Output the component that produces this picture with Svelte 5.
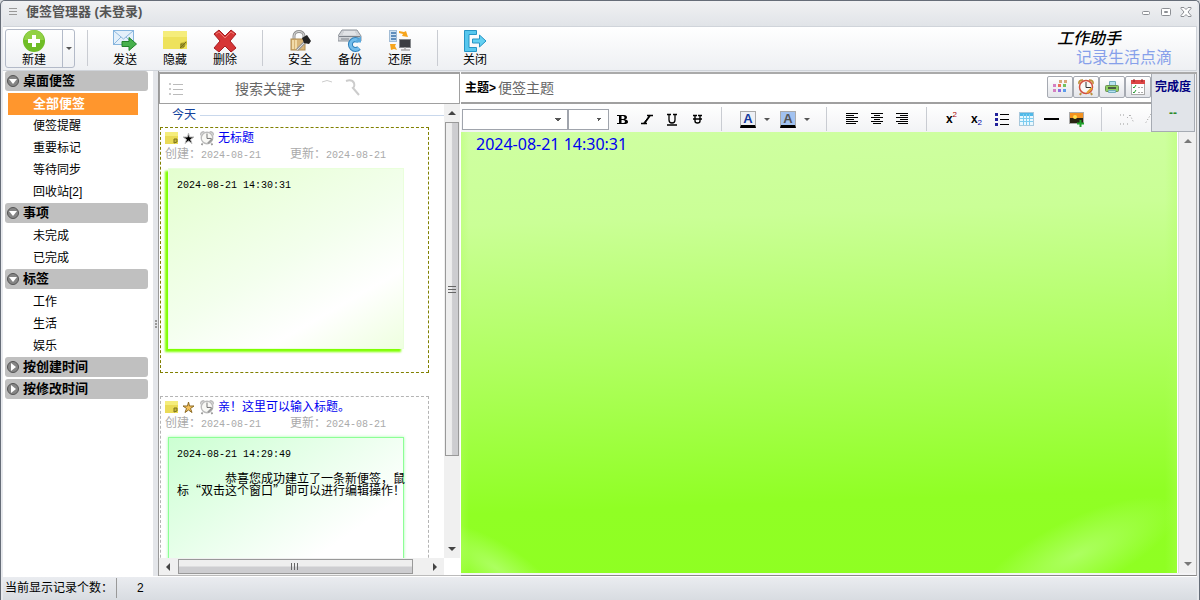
<script lang="ts">
  type Section = { title: string; open: boolean; items: string[] };

  let sections = $state<Section[]>([
    { title: '桌面便签', open: true, items: ['全部便签', '便签提醒', '重要标记', '等待同步', '回收站[2]'] },
    { title: '事项', open: true, items: ['未完成', '已完成'] },
    { title: '标签', open: true, items: ['工作', '生活', '娱乐'] },
    { title: '按创建时间', open: false, items: [] },
    { title: '按修改时间', open: false, items: [] },
  ]);

  const notes = [
    { title: '无标题', date: '2024-08-21', stamp: '2024-08-21 14:30:31', text: '', starred: false, theme: 'lime' },
    {
      title: '亲！这里可以输入标题。',
      date: '2024-08-21',
      stamp: '2024-08-21 14:29:49',
      text: '恭喜您成功建立了一条新便签，鼠标“双击这个窗口”即可以进行编辑操作！',
      starred: true,
      theme: 'mint',
    },
  ];

  let current  = $state('全部便签');
  let selected = $state(0);
  let keyword  = $state('');
  let subject  = $state('');
  let body     = $state('2024-08-21 14:30:31');
</script>

{#snippet tool(name: string, label: string)}
  <button class="tool">
    <svg width="24" height="24" viewBox="0 0 24 24" aria-hidden="true">
      {#if name === 'send'}
        <rect x="0.500" y="1.500" width="20" height="14" fill="#e4f0fa" stroke="#86b5de" />
        <path d="M1 2l9.500 8L20 2M1 15l7-7M20 15l-7-7" fill="none" stroke="#8fb8de" />
        <path d="M9 12.500h7v-4l7.500 6.500-7.500 6.500v-4H9z" fill="#46b04c" stroke="#23802b" />
      {:else if name === 'hide'}
        <path d="M0 2h24v18H0z" fill="#eee25c" />
        <path d="M0 2h24v6H0z" fill="#f5ed7b" />
        <path d="M17 20v-6l7-2v3l-5 5z" fill="#c9bd3a" />
        <path d="M17 19l6-6M18 15h3v3h-3z" fill="none" stroke="#77701a" />
      {:else if name === 'delete'}
        <path d="M1 5l5-4 6 6 6-6 5 4-6 7 6 7-5 4-6-6-6 6-5-4 6-7z" fill="#d63636" stroke="#a61d22" />
        <path d="M3 5l3-2 6 6 6-6 3 2" fill="none" stroke="#ef7770" />
      {:else if name === 'lock'}
        <path d="M6 12V7c0-6 10-6 10 0v5" fill="none" stroke="#929292" stroke-width="3" />
        <path d="M6 12V7c0-6 10-6 10 0v5" fill="none" stroke="#dedede" />
        <rect x="3" y="10" width="14" height="11" fill="#d8b578" stroke="#b08c50" />
        <path d="M5 11v9M8 11v9" stroke="#f2dba9" stroke-width="2" />
        <path d="M9 21l8-8" stroke="#999" stroke-width="3" />
        <path d="M9 21l8-8" stroke="#ddd" />
        <path d="M14 9l5-3 4 6-2 3-5-1z" fill="#222" />
      {:else if name === 'backup'}
        <path d="M4 1h15l4 6v5H0V7z" fill="#d1d3d7" stroke="#8f949b" />
        <path d="M1 7.500h21M3 10h8" stroke="#7d828a" />
        <path d="M6 3h11M5 5h13" stroke="#f2f3f5" />
        <path d="M21 12a5 5 0 1 0 0 7" fill="none" stroke="#2f80ba" stroke-width="5" />
        <path d="M21 12a5 5 0 1 0 0 7" fill="none" stroke="#72bceb" stroke-width="3" />
        <path d="M16 13.500h7V7z" fill="#5aa9dd" />
      {:else if name === 'restore'}
        <rect x="1.500" y="1.500" width="7" height="11" fill="#cfe2f3" stroke="#a3bdd6" />
        <path d="M3 4h5M3 7h5M3 10h5" stroke="#3c73aa" stroke-width="1.500" />
        <path d="M11 2l5 1 2-1 2 6-6-1 1-2-4-1z" fill="#f6a51d" />
        <path d="M2 15h6l-1 2 2 4-3-1-3 1z" fill="#f6a51d" />
        <rect x="11.500" y="10.500" width="11" height="8" fill="#3b3e43" stroke="#85888c" />
        <path d="M17 18v3M13 21h9" stroke="#aaa" stroke-width="1.500" />
      {:else}
        <path d="M13.500 1.500H1.500v21h12v-4H6v-13h7.500z" fill="#57c7ee" stroke="#2695c5" />
        <path d="M9.500 10h7V6l6.500 6-6.500 6v-4h-7z" fill="#64d0f2" stroke="#2695c5" />
      {/if}
    </svg>
    <span>{label}</span>
  </button>
{/snippet}

{#snippet clock(size: number, gray: boolean)}
  <svg width={size} height={size} viewBox="0 0 18 18" aria-hidden="true">
    <path d="M2 6q-1-4 4-4M12 2q5 0 4 4" fill={gray ? '#ddd' : '#e8c676'} stroke={gray ? '#bbb' : '#b98f3c'} stroke-width="1.500" />
    <path d="M4 15l-1 2M14 15l1 2" stroke={gray ? '#999' : '#b98f3c'} stroke-width="2" />
    <circle cx="9" cy="9" r="6.500" fill="#f8f8f5" stroke={gray ? '#bbb' : '#d2503f'} stroke-width="1.500" />
    <path d="M9 4v5.500h5" fill="none" stroke={gray ? '#666' : '#333'} />
    <path d="M10 15l5-5" stroke={gray ? '#999' : '#e3a22f'} stroke-width="2" />
  </svg>
{/snippet}

{#snippet mark(name: string)}
  <svg width="18" height="18" viewBox="0 0 18 18" aria-hidden="true">
    {#if name === 'bold'}
      <path d="M4 5h7q3 0 3 2.500q0 1.500-2 2q3 0 3 2.500q0 2-4 2H4v-1h2V6H4zM8.500 6v3h1.500q1.500 0 1.500-1.500T10 6zm0 4v3h1.500q2 0 2-1.500t-2-1.500z" fill="#000" fill-rule="evenodd" />
    {:else if name === 'italic'}
      <path d="M9 5.500h6M3 13.500h6M12.500 5L6 14" fill="none" stroke="#000" stroke-width="1.500" />
      <path d="M12 5L5 14" stroke="#000" />
    {:else if name === 'underline'}
      <path d="M4 4.500h4M10 4.500h4M6 4v6q0 3 3 3t3-3V4M4 15h10" fill="none" stroke="#000" stroke-width="1.300" />
    {:else if name === 'strike'}
      <path d="M5 5.500h4M10 5.500h4M7 5v6q0 2 2.500 2t2.500-2V5M5 9h9" fill="none" stroke="#000" stroke-width="1.400" />
    {:else if name === 'left'}
      <path d="M3 3.500h12M3 5.500h8M3 7.500h12M3 9.500h8M3 11.500h12M3 13.500h10" stroke="#000" />
    {:else if name === 'center'}
      <path d="M3 3.500h12M6 5.500h6M3 7.500h12M6 9.500h6M3 11.500h12M5 13.500h8" stroke="#000" />
    {:else if name === 'right'}
      <path d="M3 3.500h12M7 5.500h8M3 7.500h12M7 9.500h8M3 11.500h12M5 13.500h10" stroke="#000" />
    {:else if name === 'list'}
      <path d="M7 4.500h9M7 9.500h9M7 14.500h9" stroke="#000" />
      <path d="M2 3h3v3H2zM2 8h3v3H2zM2 13h3v3H2z" fill="#22229b" />
    {:else if name === 'table'}
      <rect x="1.500" y="2.500" width="14" height="13" fill="#e8f8ff" stroke="#a8c8dc" />
      <path d="M2 3h13v3H2z" fill="#50b9e8" />
      <path d="M5.500 4v11M8.500 4v11M11.500 4v11M2 8.500h13M2 11.500h13" stroke="#7dcdf0" />
    {:else if name === 'rule'}
      <path d="M1 9h15" stroke="#000" stroke-width="2" />
    {:else if name === 'image'}
      <rect x="1.500" y="2.500" width="14" height="11" fill="#282212" stroke="#aaa" />
      <path d="M2 3h13v5H2z" fill="#f39220" />
      <circle cx="7" cy="7" r="2" fill="#ffe04d" />
      <path d="M12.500 10v7M9 13.500h7" stroke="#21a32c" stroke-width="2" />
    {:else if name === 'undo'}
      <path d="M2 5h6M2 14h5M9 14h3M12 5l4 8M9 8l3-3" fill="none" stroke="#999" stroke-dasharray="1 2" />
    {:else}
      <path d="M8 4l-6 10M14 4l-5 10" fill="none" stroke="#999" stroke-dasharray="1 2" />
    {/if}
  </svg>
{/snippet}

{#snippet fmt(name: string, label: string)}
  <button class="fmt" aria-label={label}>{@render mark(name)}</button>
{/snippet}

<div class="window">
  <header class="titlebar">
    <svg width="10" height="10" viewBox="0 0 10 10" aria-hidden="true">
      <path d="M1 1.500h8M1 4.500h8M1 7.500h8" stroke="#999" />
    </svg>
    <h1>便签管理器 (未登录)</h1>
    <div class="controls">
      <button aria-label="最小化">
        <svg width="12" height="12"><rect x="2.500" y="5.500" width="7" height="3" rx="1" fill="#fff" stroke="#8c8f94" /></svg>
      </button>
      <button aria-label="最大化">
        <svg width="12" height="12"><rect x="1.500" y="2.500" width="9" height="7" rx="1" fill="#fff" stroke="#8c8f94" /><path d="M4.500 5.500h3v1h-3z" fill="none" stroke="#8c8f94" /></svg>
      </button>
      <button aria-label="关闭窗口">
        <svg width="12" height="12"><path d="M1 1.500h3l2 2 2-2h3v1L8 6l3 3.500v1H8l-2-2-2 2H1v-1L4 6 1 2.500z" fill="#fff" stroke="#8c8f94" /></svg>
      </button>
    </div>
  </header>

  <div class="toolbar">
    <div class="split-btn">
      <button class="tool tool--new">
        <svg width="24" height="24" viewBox="0 0 24 24" aria-hidden="true">
          <circle cx="12" cy="12" r="11" fill="#6fbd26" />
          <path d="M2 11a10 10 0 0 1 20 0z" fill="#92d145" />
          <path d="M12 6v12M6 12h12" stroke="#fff" stroke-width="4" />
        </svg>
        <span>新建</span>
      </button>
      <button class="split-btn__more" aria-label="更多新建选项"><i class="caret"></i></button>
    </div>
    <i class="sep"></i>
    {@render tool('send', '发送')}
    {@render tool('hide', '隐藏')}
    {@render tool('delete', '删除')}
    <i class="sep"></i>
    {@render tool('lock', '安全')}
    {@render tool('backup', '备份')}
    {@render tool('restore', '还原')}
    <i class="sep"></i>
    {@render tool('close', '关闭')}
    <div class="brand">
      <em>工作助手</em>
      <span>记录生活点滴</span>
    </div>
  </div>

  <main>
    <nav class="sidebar">
      {#each sections as section}
        <button class="group" onclick={() => (section.open = !section.open)}>
          <svg width="14" height="14" viewBox="0 0 14 14" aria-hidden="true">
            <circle cx="7" cy="7" r="5.500" fill="#858585" stroke="#555" />
            {#if section.open}
              <path d="M3 5h8l-4 5z" fill="#fff" />
            {:else}
              <path d="M5 3v8l5-4z" fill="#fff" />
            {/if}
          </svg>
          {section.title}
        </button>
        {#if section.open}
          {#each section.items as item}
            <button class="item" class:item--active={current === item} onclick={() => (current = item)}>{item}</button>
          {/each}
        {/if}
      {/each}
    </nav>
    <div class="splitter"><i></i></div>

    <section class="list">
      <div class="search">
        <svg width="16" height="16" viewBox="0 0 16 16" aria-hidden="true">
          <path d="M5 3.500h10M5 8.500h10M5 13.500h10" stroke="#bbb" />
          <path d="M1 3h2M1 8h2M1 13h2" stroke="#ccc" stroke-width="2" />
        </svg>
        <input type="text" aria-label="搜索关键字" placeholder="搜索关键字" bind:value={keyword} />
        <svg width="40" height="20" viewBox="0 0 40 20" aria-hidden="true">
          <path d="M1 3q5-3 10 0" fill="none" stroke="#ccc" />
          <path d="M25 2q6-2 8 2 1 4-1 5l6 7" fill="none" stroke="#ccc" stroke-width="2" />
        </svg>
      </div>

      <div class="list__body">
        <div class="list__main">
          <div class="notes">
            <h2>今天</h2>
            {#each notes as note, i}
              <!-- svelte-ignore a11y_click_events_have_key_events -->
              <!-- svelte-ignore a11y_no_noninteractive_element_interactions -->
              <article class="note" class:note--selected={selected === i} onclick={() => (selected = i)}>
                <div class="note__head">
                  <svg width="13" height="14" viewBox="0 0 13 14" aria-hidden="true">
                    <path d="M0 1h13v12H0z" fill="#eadb56" />
                    <path d="M0 1h13v4H0z" fill="#f5ed7b" />
                    <path d="M9 12V8h3v3z" fill="#c6b932" stroke="#7c731e" />
                  </svg>
                  <svg width="13" height="14" viewBox="0 0 13 14" aria-hidden="true">
                    <path
                      d="M6.500 2l1 4H12L8.500 8.500l1.500 4-3.500-2.500L3 12.500l1.500-4L1 6h4.500z"
                      fill={note.starred ? '#f5c158' : '#000'}
                      stroke={note.starred ? '#8c6a24' : '#bbb'}
                    />
                  </svg>
                  {@render clock(16, true)}
                  <h3>{note.title}</h3>
                </div>
                <div class="note__dates">
                  <span>创建：<time>{note.date}</time></span>
                  <span>更新：<time>{note.date}</time></span>
                </div>
                <div class="paper paper--{note.theme}">
                  <time>{note.stamp}</time>
                  {#if note.text}<p>{note.text}</p>{/if}
                </div>
              </article>
            {/each}
          </div>
          <div class="hscroll" aria-hidden="true">
            <i class="arrow arrow--left"></i>
            <div class="hscroll__track"><div class="hscroll__thumb"><i class="grip"></i></div></div>
            <i class="arrow arrow--right"></i>
          </div>
        </div>
        <div class="vscroll" aria-hidden="true">
          <i class="arrow arrow--up"></i>
          <div class="vscroll__track"><div class="vscroll__thumb"><i class="grip grip--v"></i></div></div>
          <i class="arrow arrow--down"></i>
        </div>
      </div>
    </section>

    <section class="editor">
      <div class="editor__top">
        <div class="editor__bars">
          <div class="subject">
            <label for="subject">主题&gt;</label>
            <input id="subject" type="text" placeholder="便签主题" bind:value={subject} />
            <div class="subject__tools">
              <button aria-label="颜色">
                <svg width="18" height="18" viewBox="0 0 18 18">
                  <path d="M2 6h3v3H2zM2 11h3v3H2z" fill="#d57fc0" />
                  <path d="M7 6h3v3H7z" fill="#ef6f53" />
                  <path d="M7 11h3v3H7z" fill="#8f6be0" />
                  <path d="M12 6h3v3h-3z" fill="#74c25c" />
                  <path d="M12 11h3v3h-3z" fill="#5c9cea" />
                  <path d="M8 2h3v3H8zM13 2h3v3h-3z" fill="#d8a87c" />
                </svg>
              </button>
              <button aria-label="提醒">{@render clock(18, false)}</button>
              <button aria-label="打印">
                <svg width="18" height="18" viewBox="0 0 18 18">
                  <path d="M6.500 3.500h6v5h-6z" fill="#b8e2ef" stroke="#75afbf" />
                  <rect x="2.500" y="7.500" width="13" height="6" rx="1" fill="#8fcf62" stroke="#6b8f55" />
                  <path d="M5 9h8v2H5z" fill="#4a5a44" />
                  <path d="M5.500 12.500h7v2h-7z" fill="#b8e2ef" stroke="#75afbf" />
                </svg>
              </button>
              <button aria-label="待办">
                <svg width="18" height="18" viewBox="0 0 18 18">
                  <rect x="2.500" y="2.500" width="13" height="14" fill="#fff" stroke="#aaa" />
                  <path d="M2 2h14v4H2z" fill="#dc4545" />
                  <path d="M5 1v3M13 1v3" stroke="#8d2020" />
                  <path d="M4 9l1 1 2-3M4 14l1 1 2-3" fill="none" stroke="#279b32" />
                  <path d="M9 9.500h5M9 14.500h5" stroke="#aaa" stroke-dasharray="2 1" />
                </svg>
              </button>
            </div>
          </div>

          <div class="format">
            <select class="format__font" aria-label="字体"><option></option></select>
            <select class="format__size" aria-label="字号"><option></option></select>
            {@render fmt('bold', '粗体')}
            {@render fmt('italic', '斜体')}
            {@render fmt('underline', '下划线')}
            {@render fmt('strike', '删除线')}
            <i class="sep"></i>
            <button class="color" aria-label="文字颜色"><b>A</b><i class="caret"></i></button>
            <button class="color color--back" aria-label="背景颜色"><b>A</b><i class="caret"></i></button>
            <i class="sep"></i>
            {@render fmt('left', '左对齐')}
            {@render fmt('center', '居中')}
            {@render fmt('right', '右对齐')}
            <i class="sep"></i>
            <button class="fmt fmt--script" aria-label="上标">x<sup>2</sup></button>
            <button class="fmt fmt--script" aria-label="下标">x<sub>2</sub></button>
            {@render fmt('list', '列表')}
            {@render fmt('table', '表格')}
            {@render fmt('rule', '分隔线')}
            {@render fmt('image', '图片')}
            <i class="sep"></i>
            {@render fmt('undo', '撤销')}
            {@render fmt('redo', '重做')}
          </div>
        </div>
        <div class="progress">
          <span>完成度</span>
          <strong>--</strong>
        </div>
      </div>

      <div class="editor__body">
        <div class="sheet">
          <textarea aria-label="便签内容" bind:value={body} spellcheck="false"></textarea>
        </div>
        <div class="vscroll vscroll--idle" aria-hidden="true">
          <i class="arrow arrow--up"></i>
          <i class="arrow arrow--down"></i>
        </div>
      </div>
    </section>
  </main>

  <footer>
    <span class="footer__label">当前显示记录个数：</span>
    <span class="footer__count">2</span>
  </footer>
</div>

<style>
  :global(body) { margin: 0; background: #d6d9dd; }

  .window, .window :global(*) { box-sizing: border-box; }

  .window {
    height: 100vh;
    display: flex;
    flex-direction: column;
    border: 1px solid #666d78;
    border-bottom: none;
    border-radius: 5px 5px 0 0;
    padding: 0 2px;
    background: #e7e9ed;
    color: #000;
    font: 12px/16px "Liberation Sans", "Noto Sans CJK SC", sans-serif;
    overflow: hidden;
  }

  button, input, select, textarea {
    font: inherit;
    color: inherit;
    margin: 0;
    padding: 0;
    border: none;
    border-radius: 0;
    background: none;
    outline: none;
  }

  button { cursor: pointer; }
  svg { display: block; flex-shrink: 0; }
  h1, h2, h3, p { margin: 0; }

  .titlebar {
    flex: 0 0 25px;
    display: flex;
    align-items: center;
    gap: 8px;
    padding: 0 5px 3px 5px;
    background: linear-gradient(#f0f1f3, #e1e4e8);
  }

  h1 {
    flex: 1;
    font-size: 13px;
    font-weight: 700;
    color: #555;
  }

  .controls { display: flex; gap: 8px; }

  .toolbar {
    flex: 0 0 45px;
    display: flex;
    align-items: center;
    padding: 0 24px 1px 2px;
    border: 1px solid #d0d4da;
    border-left: none;
    background: linear-gradient(#fff, #eef0f3);
  }

  .tool {
    width: 50px;
    display: flex;
    flex-direction: column;
    align-items: center;
    justify-content: center;
    line-height: 14px;
  }

  .split-btn {
    display: flex;
    height: 39px;
    border: 1px solid #b3bac8;
    border-radius: 3px;
  }

  .tool--new { width: 56px; }
  .split-btn__more {
    width: 12px;
    border-left: 1px solid #b3bac8;
  }

  .caret {
    display: block;
    width: 0;
    margin: 0 auto;
    border: 3px solid transparent;
    border-top-color: #555;
    border-bottom: none;
  }

  .sep {
    width: 1px;
    height: 36px;
    margin: 0 12px;
    background: #c9ccd2;
    flex-shrink: 0;
  }

  .brand {
    margin-left: auto;
    width: 115px;
    display: flex;
    flex-direction: column;
    line-height: 19px;
  }

  .brand em {
    font-size: 16px;
    font-weight: 500;
  }

  .brand span {
    align-self: flex-end;
    font-size: 16px;
    color: #86a0ea;
  }

  main {
    flex: 1;
    min-height: 0;
    display: flex;
  }

  .sidebar {
    width: 150px;
    flex-shrink: 0;
    padding: 0 5px 0 2px;
    background: #fff;
    display: flex;
    flex-direction: column;
  }

  .group {
    height: 20px;
    margin: 0 0 2px;
    padding-left: 1px;
    display: flex;
    align-items: center;
    gap: 3px;
    border-radius: 3px;
    background: #c0c0c0;
    font-size: 13px;
    font-weight: 700;
  }

  .item {
    height: 22px;
    margin: 0 10px 0 3px;
    padding-left: 25px;
    text-align: left;
  }

  .item--active {
    background: #ff962d;
    color: #fff;
    font-size: 13px;
    font-weight: 700;
  }

  .splitter {
    width: 6px;
    flex-shrink: 0;
    display: flex;
    align-items: center;
    justify-content: center;
    background: #e4e6ea;
    border-right: 1px solid #999;
  }

  .splitter i { height: 8px; border-left: 2px dotted #999; }

  .list {
    width: 302px;
    flex-shrink: 0;
    display: flex;
    flex-direction: column;
    margin-top: 1px;
    padding-right: 1px;
    background: #fff;
    border-bottom: 1px solid #bbb;
  }

  .search {
    flex: 0 0 32px;
    display: flex;
    align-items: center;
    padding: 0 98px 0 8px;
    border: 1px solid #a0a0a0;
    border-width: 2px 1px 1px;
  }

  .search input {
    flex: 1;
    min-width: 0;
    margin-left: 51px;
    font-size: 14px;
    line-height: 20px;
  }

  .search input::placeholder, .subject input::placeholder { color: #666; opacity: 1; }

  .list__body {
    flex: 1;
    min-height: 0;
    display: flex;
  }

  .list__main {
    flex: 1;
    min-width: 0;
    display: flex;
    flex-direction: column;
  }

  .notes {
    flex: 1;
    min-height: 0;
    overflow: hidden;
    padding: 3px 0 0 1px;
  }

  h2 {
    display: flex;
    align-items: center;
    gap: 4px;
    padding-left: 12px;
    margin-bottom: 4px;
    font-size: 12px;
    font-weight: 400;
    line-height: 16px;
    color: #15439c;
  }

  h2::after {
    content: '';
    flex: 1;
    height: 1px;
    background: #c9d8ec;
  }

  .note {
    width: 269px;
    height: 246px;
    margin-bottom: 23px;
    padding: 2px 4px;
    border: 1px dashed #b4b4b4;
  }

  .note--selected { border-color: #808000; }

  .note__head {
    display: flex;
    align-items: center;
    gap: 4px;
  }

  h3 {
    font-size: 12px;
    font-weight: 400;
    line-height: 16px;
    margin-left: -1px;
    color: #0000f0;
  }

  .note__dates {
    display: flex;
    gap: 29px;
    color: #aaa;
  }

  time {
    display: inline-block;
    font: 10px/16px "Liberation Mono", monospace;
  }

  .paper {
    width: 236px;
    height: 181px;
    margin: 4px 0 0 3px;
    padding: 7px 0 8px 8px;
    border: 1px solid #eaffdc;
  }

  .paper--lime {
    background: linear-gradient(150deg, #e4ffcf 0%, #f3ffed 50%, #fff 75%, #eeffdf 100%);
    box-shadow: -3px 3px 2px #7fff00;
  }

  .paper--mint {
    background: linear-gradient(145deg, #ccffd2, #fff 65%);
    border-color: #8dff96;
    box-shadow: 0 0 3px #a6ffac;
  }

  .paper p {
    width: 230px;
    margin-top: 9px;
    font-family: "Noto Sans CJK SC", sans-serif;
    line-height: 12px;
    text-indent: 48px;
  }

  .arrow {
    display: block;
    flex-shrink: 0;
    width: 0;
    height: 0;
    border: 4px solid transparent;
  }

  .arrow--up { border-bottom-color: #444; border-top: none; }
  .arrow--down { border-top-color: #444; border-bottom: none; }
  .arrow--left { border-right-color: #444; border-left: none; }
  .arrow--right { border-left-color: #444; border-right: none; }

  .hscroll {
    flex: 0 0 17px;
    display: flex;
    align-items: center;
    gap: 8px;
    padding: 0 7px;
    background: #f0f0f0;
  }

  .hscroll__track { flex: 1; }
  .hscroll__thumb {
    width: 95%;
    height: 15px;
    display: flex;
    align-items: center;
    justify-content: center;
    border: 1px solid #999;
    background: linear-gradient(#eee 45%, #cdcdd0 55%);
  }

  .vscroll {
    flex: 0 0 16px;
    display: flex;
    flex-direction: column;
    align-items: center;
    gap: 7px;
    padding: 7px 0;
    margin-bottom: 17px;
    background: #f0f0f0;
  }

  .vscroll__track { flex: 1; align-self: stretch; padding: 0 1px; }
  .vscroll__thumb {
    height: 80%;
    display: flex;
    align-items: center;
    justify-content: center;
    border: 1px solid #999;
    background: linear-gradient(90deg, #eee 45%, #cdcdd0 55%);
  }

  .vscroll--idle {
    flex-basis: 18px;
    margin: 0;
    justify-content: space-between;
    border-left: 1px solid #ddd;
  }

  .vscroll--idle .arrow { opacity: 0.7; }

  .grip {
    width: 8px;
    height: 7px;
    background: repeating-linear-gradient(90deg, #666 0 1px, transparent 1px 3px);
  }

  .grip--v { background: repeating-linear-gradient(#666 0 1px, transparent 1px 3px); }

  .editor {
    flex: 1;
    min-width: 0;
    display: flex;
    flex-direction: column;
    margin-top: 1px;
    padding-bottom: 2px;
    border-bottom: 1px solid #888;
    border-right: 1px solid #aaa;
    background: #f4f4f6;
  }

  .editor__top {
    display: flex;
    flex-shrink: 0;
    border-top: 2px solid #aaa;
  }

  .editor__bars { flex: 1; min-width: 0; }

  .subject {
    height: 30px;
    display: flex;
    align-items: center;
    padding-left: 4px;
    border-bottom: 2px solid #a0a0a0;
    background: #fff;
  }

  .subject label { font-weight: 700; }
  .subject input {
    flex: 1;
    min-width: 0;
    margin-left: 2px;
    font-size: 14px;
    line-height: 20px;
  }

  .subject__tools { display: flex; align-self: flex-start; margin-top: 2px; }
  .subject__tools button {
    width: 26px;
    height: 22px;
    display: flex;
    align-items: center;
    justify-content: center;
    border: 1px solid #a6aab2;
    border-radius: 2px;
    background: linear-gradient(#fff, #e3e5ea);
  }

  .format {
    height: 28px;
    display: flex;
    align-items: center;
    padding: 2px 0 0 1px;
    overflow: hidden;
    background: linear-gradient(#fff, #f2f3f5);
  }

  .format .sep { height: 24px; }

  select {
    appearance: none;
    height: 21px;
    flex-shrink: 0;
    border: 1px solid #a0a4ac;
    background: #fff;
    background-image: linear-gradient(45deg, transparent 50%, #555 50%), linear-gradient(-45deg, transparent 50%, #555 50%);
    background-size: 3px 3px;
    background-repeat: no-repeat;
    background-position: right 9px center, right 6px center;
  }

  .format__font { width: 106px; }
  .format__size { width: 41px; }

  .fmt {
    width: 25px;
    flex-shrink: 0;
    display: flex;
    align-items: center;
    justify-content: center;
  }

  .fmt--script { font-weight: 700; }
  .fmt--script sup, .fmt--script sub {
    font-size: 8px;
    line-height: 8px;
    font-weight: 400;
  }

  .fmt--script sup { align-self: flex-start; color: #a00; }
  .fmt--script sub { align-self: flex-end; color: #00a; }

  .color {
    width: 40px;
    flex-shrink: 0;
    display: flex;
    align-items: center;
    padding: 0 4px 0 6px;
  }

  .color b {
    width: 16px;
    border: 1px solid #aaa;
    border-bottom: 3px solid #000;
    background: #eef0f5;
    font-size: 13px;
    line-height: 13px;
    color: #163b9e;
  }

  .color .caret { margin: 0 0 0 auto; }
  .color--back b { background: #a2c2f0; color: #555; }

  .progress {
    width: 44px;
    flex-shrink: 0;
    margin-right: 1px;
    display: flex;
    flex-direction: column;
    align-items: center;
    gap: 10px;
    padding-top: 5px;
    border: 1px solid #a6abb3;
    border-top: none;
    background: #e1e4e9;
    font-weight: 700;
    color: #000080;
    white-space: nowrap;
  }

  .progress strong { color: #2c8a2c; }

  .editor__body {
    flex: 1;
    min-height: 0;
    display: flex;
    background: #fff;
  }

  .sheet {
    position: relative;
    flex: 1;
    min-width: 0;
    display: flex;
    margin-right: 1px;
    overflow: hidden;
    background:
      linear-gradient(90deg, #b0ff6055, transparent 8px, transparent calc(100% - 12px), #b0ff6055),
      linear-gradient(178deg, #cfffa2 0%, #caff96 20%, #b0ff60 50%, #90ff24 82%, #8fff22 100%);
  }

  /* light streaks in the bottom corners of the sheet */
  .sheet::before, .sheet::after {
    content: '';
    position: absolute;
    pointer-events: none;
    background: radial-gradient(closest-side, #c0ff8a99, #b8ff7866 45%, transparent);
  }

  .sheet::before {
    left: -40px;
    bottom: -20px;
    width: 150px;
    height: 50px;
    transform: rotate(32deg);
  }

  .sheet::after {
    right: -10px;
    bottom: -18px;
    width: 220px;
    height: 72px;
    transform: rotate(-26deg);
  }

  textarea {
    flex: 1;
    min-width: 0;
    padding: 1px 15px;
    resize: none;
    font: 16px/22px "Noto Sans", "Noto Sans CJK SC", sans-serif;
    color: #0000f0;
  }

  footer {
    flex: 0 0 24px;
    display: flex;
    align-items: center;
    padding-bottom: 2px;
    border-top: 1px solid #fff;
    background: linear-gradient(#eaecf0, #d8dce1);
  }

  .footer__label {
    width: 114px;
    padding-left: 2px;
    border-right: 1px solid #999;
    line-height: 20px;
    white-space: nowrap;
  }

  .footer__count { padding-left: 20px; }
</style>
